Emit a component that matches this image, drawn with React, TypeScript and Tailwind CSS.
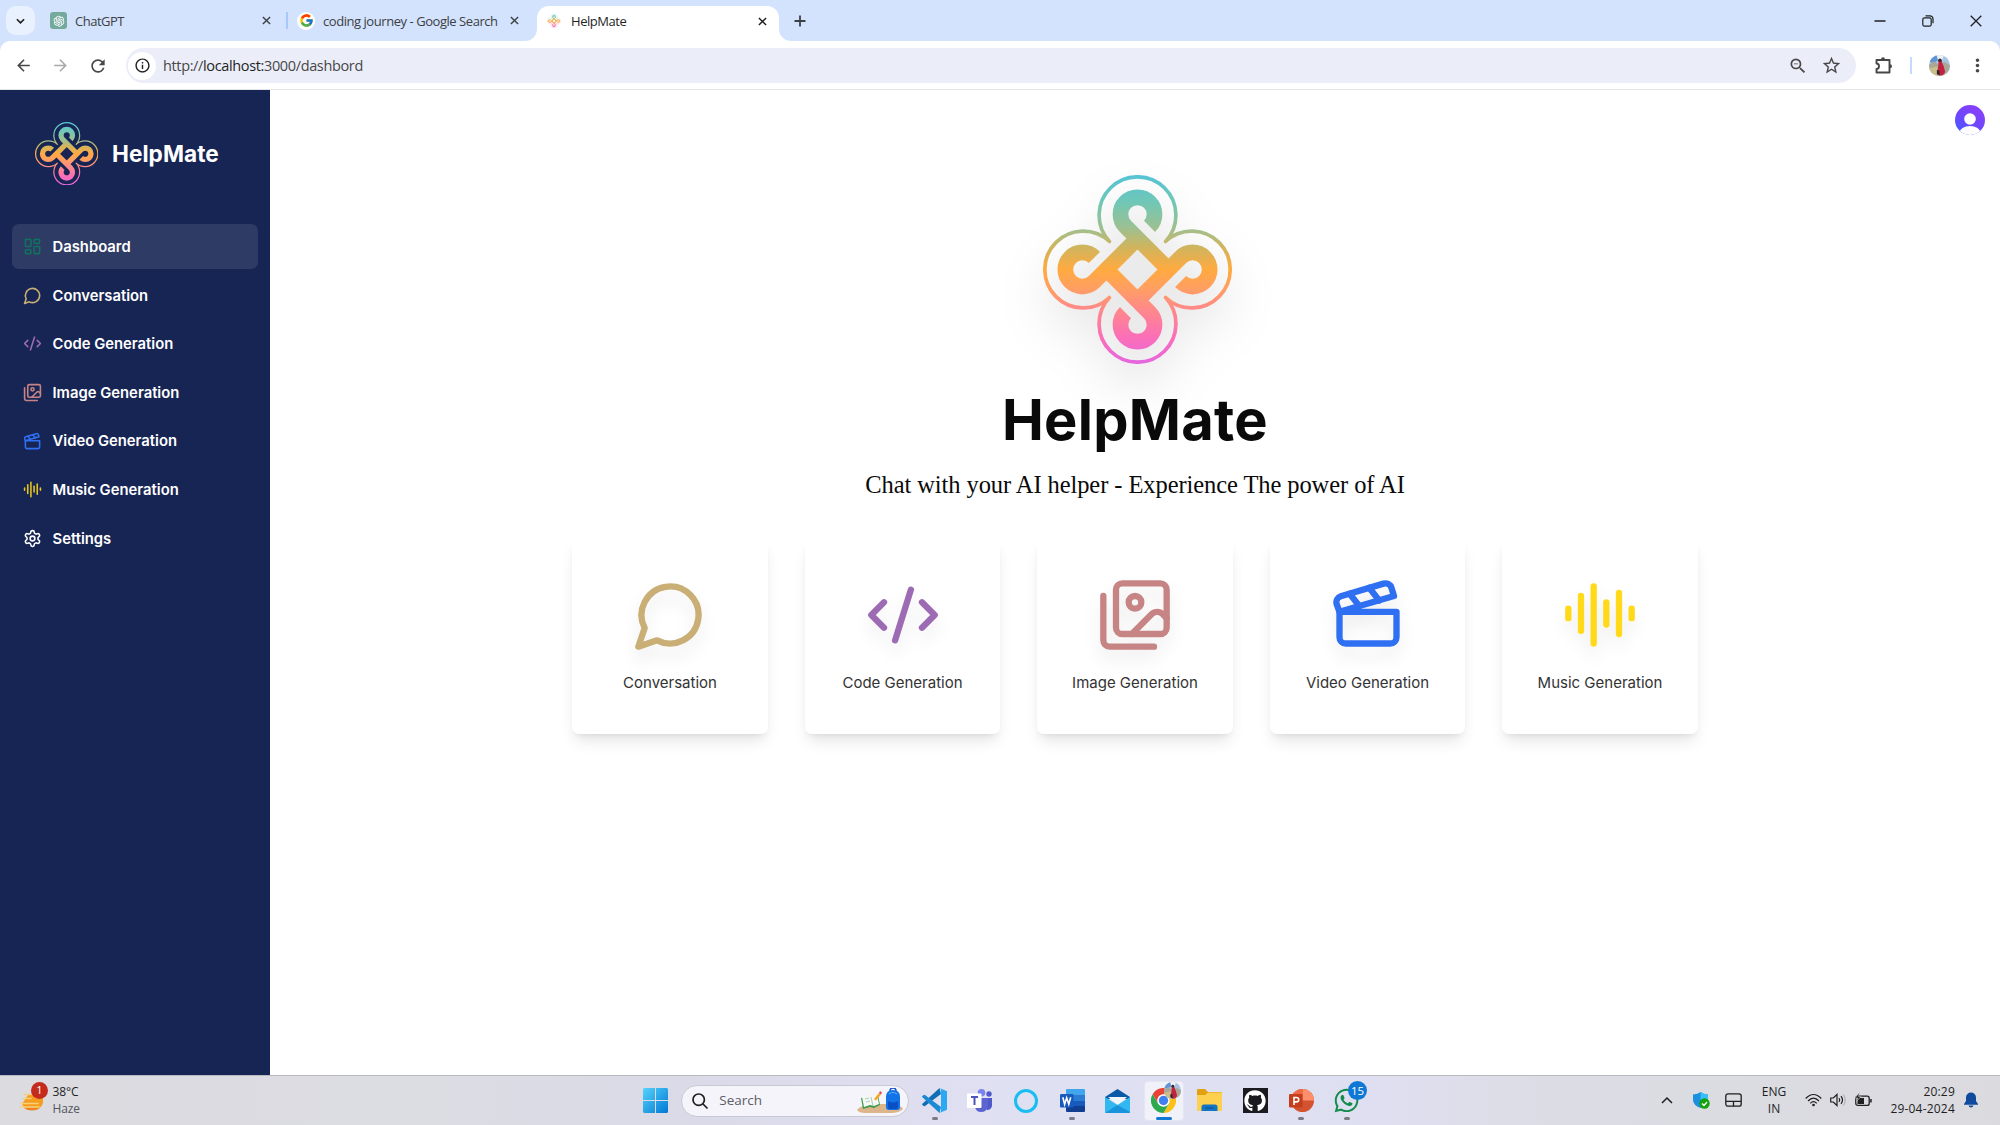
import React from "react";
import { FcGoogle } from "react-icons/fc";
import { FaGithub, FaWhatsapp } from "react-icons/fa";
import { AiOutlineOpenAI } from "react-icons/ai";
import {
  MdArrowBack,
  MdArrowForward,
  MdRefresh,
  MdStarOutline,
  MdMoreVert,
  MdZoomOut,
  MdInfoOutline,
} from "react-icons/md";

type IconProps = { className?: string };

function Stroke({ className, children }: IconProps & { children: React.ReactNode }) {
  return (
    <svg viewBox="0 0 24 24" fill="none" stroke="currentColor" strokeWidth="2" strokeLinecap="round" strokeLinejoin="round" className={className}>
      {children}
    </svg>
  );
}

const DashboardIcon = ({ className }: IconProps) => (
  <Stroke className={className}>
    <rect width="7" height="9" x="3" y="3" rx="1" />
    <rect width="7" height="5" x="14" y="3" rx="1" />
    <rect width="7" height="9" x="14" y="12" rx="1" />
    <rect width="7" height="5" x="3" y="16" rx="1" />
  </Stroke>
);
const ChatIcon = ({ className }: IconProps) => (
  <Stroke className={className}>
    <path d="M7.9 20A9 9 0 1 0 4 16.1L2 22Z" />
  </Stroke>
);
const CodeIcon = ({ className }: IconProps) => (
  <Stroke className={className}>
    <path d="m18 16 4-4-4-4" />
    <path d="m6 8-4 4 4 4" />
    <path d="m14.5 4-5 16" />
  </Stroke>
);
const ImagesIcon = ({ className }: IconProps) => (
  <Stroke className={className}>
    <path d="M18 22H4a2 2 0 0 1-2-2V6" />
    <path d="m22 13-1.296-1.296a2.41 2.41 0 0 0-3.408 0L11 18" />
    <circle cx="12" cy="8" r="2" />
    <rect width="16" height="16" x="6" y="2" rx="2" />
  </Stroke>
);
const ClapperIcon = ({ className }: IconProps) => (
  <Stroke className={className}>
    <path d="M20.2 6 3 11l-.9-2.4c-.3-1.1.3-2.2 1.3-2.5l13.5-4c1.1-.3 2.2.3 2.5 1.3Z" />
    <path d="m6.2 5.3 3.1 3.9" />
    <path d="m12.4 3.4 3.1 4" />
    <path d="M3 11h18v8a2 2 0 0 1-2 2H5a2 2 0 0 1-2-2Z" />
  </Stroke>
);
const AudioIcon = ({ className }: IconProps) => (
  <Stroke className={className}>
    <path d="M2 10v3" />
    <path d="M6 6v11" />
    <path d="M10 3v18" />
    <path d="M14 8v7" />
    <path d="M18 5v13" />
    <path d="M22 10v3" />
  </Stroke>
);
const SettingsIcon = ({ className }: IconProps) => (
  <Stroke className={className}>
    <path d="M12.22 2h-.44a2 2 0 0 0-2 2v.18a2 2 0 0 1-1 1.73l-.43.25a2 2 0 0 1-2 0l-.15-.08a2 2 0 0 0-2.73.73l-.22.38a2 2 0 0 0 .73 2.73l.15.1a2 2 0 0 1 1 1.72v.51a2 2 0 0 1-1 1.74l-.15.09a2 2 0 0 0-.73 2.73l.22.38a2 2 0 0 0 2.73.73l.15-.08a2 2 0 0 1 2 0l.43.25a2 2 0 0 1 1 1.73V20a2 2 0 0 0 2 2h.44a2 2 0 0 0 2-2v-.18a2 2 0 0 1 1-1.73l.43-.25a2 2 0 0 1 2 0l.15.08a2 2 0 0 0 2.73-.73l.22-.39a2 2 0 0 0-.73-2.73l-.15-.08a2 2 0 0 1-1-1.74v-.5a2 2 0 0 1 1-1.74l.15-.09a2 2 0 0 0 .73-2.73l-.22-.38a2 2 0 0 0-2.73-.73l-.15.08a2 2 0 0 1-2 0l-.43-.25a2 2 0 0 1-1-1.73V4a2 2 0 0 0-2-2z" />
    <circle cx="12" cy="12" r="3" />
  </Stroke>
);

/* Four interlaced loops inside a clover outline, one quarter drawn and rotated. */
function Knot({ className, id }: IconProps & { id: string }) {
  return (
    <svg viewBox="-283 -283 566 566" className={className} fill="none">
      <defs>
        <linearGradient id={id} gradientUnits="userSpaceOnUse" x1="0" y1="-283" x2="0" y2="283">
          <stop offset="0" stopColor="#55c3d6" />
          <stop offset=".15" stopColor="#72c7b4" />
          <stop offset=".28" stopColor="#9dc092" />
          <stop offset=".38" stopColor="#cfb55e" />
          <stop offset=".5" stopColor="#ffaa40" />
          <stop offset=".6" stopColor="#ff9f62" />
          <stop offset=".7" stopColor="#ff8b86" />
          <stop offset=".86" stopColor="#fb6eb8" />
          <stop offset="1" stopColor="#e466e0" />
        </linearGradient>
        <mask id={id + "m"} maskUnits="userSpaceOnUse" x="-283" y="-283" width="566" height="566">
          <g stroke="#fff">
            <path strokeWidth="11" strokeLinejoin="round" d="M-84-84A115 115 0 1 1 84-84A115 115 0 1 1 84 84A115 115 0 1 1-84 84A115 115 0 1 1-84-84Z" />
            {[0, 90, 180, 270].map((r) => (
              <path key={r} transform={`rotate(${r})`} strokeWidth="47" d="M36-129A51 51 0 1 0-36-129L93 0" />
            ))}
          </g>
        </mask>
      </defs>
      <rect x="-283" y="-283" width="566" height="566" fill={`url(#${id})`} mask={`url(#${id}m)`} />
    </svg>
  );
}

const nav = [
  { label: "Dashboard", Icon: DashboardIcon, row: "bg-white/10", color: "text-[#10715c]" },
  { label: "Conversation", Icon: ChatIcon, row: "", color: "text-[#c9ae75]" },
  { label: "Code Generation", Icon: CodeIcon, row: "", color: "text-[#9c6bb3]" },
  { label: "Image Generation", Icon: ImagesIcon, row: "", color: "text-[#c78484]" },
  { label: "Video Generation", Icon: ClapperIcon, row: "", color: "text-[#2f6ff2]" },
  { label: "Music Generation", Icon: AudioIcon, row: "", color: "text-[#e5c41c]" },
  { label: "Settings", Icon: SettingsIcon, row: "", color: "text-white" },
];

const tools = [
  { label: "Conversation", Icon: ChatIcon, color: "text-[#c9ae75]" },
  { label: "Code Generation", Icon: CodeIcon, color: "text-[#9c6bb3]" },
  { label: "Image Generation", Icon: ImagesIcon, color: "text-[#c78484]" },
  { label: "Video Generation", Icon: ClapperIcon, color: "text-[#2f6ff2]" },
  { label: "Music Generation", Icon: AudioIcon, color: "text-[#ffd91a]" },
];

const Cross = ({ className }: IconProps) => (
  <svg viewBox="0 0 10 10" className={className} stroke="currentColor" strokeWidth="1.6" fill="none">
    <path d="M1 1l8 8M9 1l-8 8" />
  </svg>
);

function TravelPhoto({ className }: IconProps) {
  return (
    <svg viewBox="0 0 24 24" className={className}>
      <rect width="24" height="24" fill="#a9c3e2" />
      <path d="M0 0h8l3 5-5 4-6-1z" fill="#5f94d6" />
      <path d="M9 0h8l-2 6-5-1z" fill="#eef3f8" />
      <path d="M0 11l6-4 5 4 7-3 6 4v12H0z" fill="#a9a896" />
      <path d="M0 15l9-2 4 11H0z" fill="#c9bf8c" />
      <path d="M11 6l3-.5 1 3 2 5 1.500 6-3 4h-4l-2-4 1-6z" fill="#c2213f" />
      <circle cx="12.500" cy="6" r="2" fill="#3a2a2c" />
      <path d="M9 17l3 1v5l-3-1z" fill="#2a2630" />
    </svg>
  );
}

function BrowserTabs() {
  return (
    <div className="flex h-[41px] items-end bg-[#d3e3fd] text-[13px] text-[#3c4043]">
      <div className="mb-[6px] ml-[6px] flex h-[29px] w-[29px] items-center justify-center rounded-[10px] bg-[#e9f1fe]">
        <svg viewBox="0 0 10 6" className="h-[6px] w-[9px]" fill="none" stroke="#1f1f1f" strokeWidth="1.8"><path d="M1 1l4 4 4-4" /></svg>
      </div>
      <div className="ml-[15px] flex h-[41px] w-[236px] items-center">
        <div className="flex h-[17px] w-[17px] items-center justify-center rounded-[3px] bg-[#74aa9c]">
          <AiOutlineOpenAI className="h-[14px] w-[14px] text-white" />
        </div>
        <span className="ml-[8px] pt-[2px] tracking-[-0.5px]">ChatGPT</span>
        <Cross className="ml-auto mr-[15px] h-[9px] w-[9px]" />
      </div>
      <div className="mb-[12px] h-[17px] w-[2px] bg-[#a8c7fa]" />
      <div className="flex h-[41px] w-[236px] items-center">
        <div className="ml-[9px] flex h-[18px] w-[18px] items-center justify-center rounded-full bg-white">
          <FcGoogle className="h-[15px] w-[15px]" />
        </div>
        <span className="ml-[8px] whitespace-nowrap pt-[2px] tracking-[-0.45px]">coding journey - Google Search</span>
        <Cross className="ml-auto mr-[5px] h-[9px] w-[9px]" />
      </div>
      <svg viewBox="0 0 12 12" className="ml-px h-3 w-3" fill="#fff"><path d="M12 0v12H0A12 12 0 0 0 12 0z" /></svg>
      <div className="flex h-[35px] w-[242px] items-center rounded-t-[12px] bg-white pb-[6px] pt-px text-[#1f1f1f]">
        <Knot id="fav" className="ml-[10px] h-[14px] w-[14px]" />
        <span className="ml-[10px] pt-[2px] tracking-[-0.45px]">HelpMate</span>
        <Cross className="ml-auto mr-[12px] h-[9px] w-[9px]" />
      </div>
      <svg viewBox="0 0 12 12" className="h-3 w-3" fill="#fff"><path d="M0 0v12h12A12 12 0 0 1 0 0z" /></svg>
      <svg viewBox="0 0 12 12" className="mb-[14px] ml-[3px] h-[12px] w-[12px]" stroke="#3c4043" strokeWidth="1.8"><path d="M6 0.500v11M.5 6h11" /></svg>
      <div className="ml-auto flex h-[41px] items-center text-[#1f1f1f]">
        <svg viewBox="0 0 12 12" className="h-3 w-3" stroke="currentColor" strokeWidth="1.5"><path d="M.5 6h11" /></svg>
        <svg viewBox="0 0 12 12" className="ml-[36px] h-3 w-3" fill="none" stroke="currentColor" strokeWidth="1.2">
          <rect x=".8" y="2.800" width="8.400" height="8.400" rx="1.800" />
          <path d="M3.500.8h4.500a3 3 0 0 1 3 3v4.500" />
        </svg>
        <svg viewBox="0 0 12 12" className="ml-[36px] mr-[18px] h-3 w-3" stroke="currentColor" strokeWidth="1.3"><path d="M.7.7l10.600 10.600M11.300.7L.7 11.300" /></svg>
      </div>
    </div>
  );
}

function Toolbar() {
  return (
    <div className="bg-[#d3e3fd]">
      <div className="flex h-[49px] items-center rounded-t-[10px] border-b border-[#e6e6e6] bg-white pt-px text-[#474747]">
        <MdArrowBack className="ml-[13.500px] h-[19px] w-[19px]" />
        <MdArrowForward className="ml-[18px] h-[19px] w-[19px] text-[#a9a9a9]" />
        <MdRefresh className="ml-[18px] h-[20px] w-[20px]" />
        <div className="ml-[18px] flex h-[35px] w-[1730px] items-center rounded-full bg-[#ebeef9]">
          <div className="ml-[2.500px] flex h-[28px] w-[28px] items-center justify-center rounded-full bg-white">
            <MdInfoOutline className="h-[17px] w-[17px] text-[#1f1f1f]" />
          </div>
          <span className="ml-[7px] text-[14.500px] tracking-[-0.36px]">
            http://<span className="text-[#1f1f1f]">localhost:</span>3000/dashbord
          </span>
          <MdZoomOut className="ml-auto h-[20px] w-[20px]" />
          <MdStarOutline className="ml-[13px] mr-[14px] h-[21px] w-[21px]" />
        </div>
        <svg viewBox="0 0 18 18" className="ml-[19.500px] h-[18px] w-[18px]" fill="none" stroke="currentColor" strokeWidth="1.900" strokeLinejoin="round">
          <path d="M1.500 3H14.500V15.500H1.500V12Q4 11.800 4 9.200T1.500 6.500z" />
          <path d="M6 2.500a2 2.200 0 0 1 4 0zM15 7.300a2 2 0 0 1 0 4z" fill="currentColor" stroke="none" />
        </svg>
        <div className="ml-[17px] h-[17px] w-[2px] bg-[#c6dafc]" />
        <TravelPhoto className="ml-[17px] h-[21px] w-[21px] rounded-full" />
        <MdMoreVert className="ml-[16.500px] h-[21px] w-[21px]" />
      </div>
    </div>
  );
}

function Sidebar() {
  return (
    <aside className="flex w-[270px] flex-col bg-[#172554] font-['Inter'] text-white">
      <div className="ml-[34.500px] mt-[31.500px] flex h-[64px] items-center">
        <Knot id="side" className="h-[63.500px] w-[63.500px]" />
        <span className="ml-[14px] pt-px text-[22.600px] font-bold leading-none tracking-[0.05px]">HelpMate</span>
      </div>
      <nav className="mt-[38.500px] flex flex-col gap-[3.650px] pl-[11.500px] pr-[12px]">
        {nav.map(({ label, Icon, row, color }) => (
          <div key={label} className={`flex h-[45px] items-center rounded-[7px] ${row}`}>
            <Icon className={`ml-[11px] h-[19px] w-[19px] ${color}`} />
            <span className="ml-[11px] pt-px text-[14.800px] font-semibold tracking-[0.01px]">{label}</span>
          </div>
        ))}
      </nav>
    </aside>
  );
}

function Main() {
  return (
    <main className="relative flex flex-1 flex-col items-center bg-white">
      <svg viewBox="0 0 30 30" className="absolute right-[15px] top-[15px] h-[30px] w-[30px]">
        <defs>
          <linearGradient id="user" x1="0" y1="1" x2=".7" y2="0">
            <stop offset="0" stopColor="#3a62ff" />
            <stop offset=".5" stopColor="#6c47ff" />
            <stop offset="1" stopColor="#8a3ffc" />
          </linearGradient>
          <clipPath id="userClip"><circle cx="15" cy="15" r="15" /></clipPath>
        </defs>
        <g clipPath="url(#userClip)">
          <rect width="30" height="30" fill="url(#user)" />
          <circle cx="15" cy="14" r="5.800" fill="#fff" />
          <ellipse cx="15" cy="27.500" rx="10.500" ry="6.500" fill="#fff" />
        </g>
      </svg>
      <Knot id="hero" className="ml-[5px] mt-[85px] h-[189px] w-[189px] overflow-visible drop-shadow-[0_25px_25px_rgba(0,0,0,0.15)]" />
      <h1 className="mt-[28px] font-['Inter'] text-[56px] font-bold leading-[56px] tracking-[0.3px] text-[#0a0a0a]">HelpMate</h1>
      <p className="mt-[21px] whitespace-nowrap font-['Liberation_Serif'] text-[24.500px] leading-[32px] tracking-[-0.08px] text-[#0a0a0a]">
        Chat with your AI helper - Experience The power of AI
      </p>
      <div className="mt-[36.500px] flex gap-[37px]">
        {tools.map(({ label, Icon, color }) => (
          <div key={label} className="flex h-[196px] w-[195.500px] flex-col items-center rounded-[7px] bg-white shadow-[0_10px_15px_-3px_rgba(0,0,0,0.1),0_4px_6px_-4px_rgba(0,0,0,0.1)]">
            <Icon className={`mt-[39px] h-[76px] w-[76px] drop-shadow-[0_10px_8px_rgba(0,0,0,0.08)] ${color}`} />
            <span className="mt-[18.500px] font-['Inter'] text-[15px] leading-[24px] text-[#333]">{label}</span>
          </div>
        ))}
      </div>
    </main>
  );
}

function WindowsLogo() {
  return (
    <svg viewBox="0 0 25 25" className="h-[25px] w-[25px]">
      <defs>
        <linearGradient id="win" gradientUnits="userSpaceOnUse" x1="0" y1="0" x2="25" y2="25">
          <stop offset="0" stopColor="#55d3fb" />
          <stop offset="1" stopColor="#0078d4" />
        </linearGradient>
      </defs>
      <path fill="url(#win)" d="M1 0h11v12H0V1zM13 0h11l1 1v11H13zM0 13h12v12H1l-1-1zM13 13h12v11l-1 1H13z" />
    </svg>
  );
}

function SearchArt() {
  return (
    <svg viewBox="0 0 46 26" className="h-[26px] w-[46px]">
      <path d="M0 22q2-4 14-6h18q13 1 14 5-4 4-12 4H8q-6 0-8-3z" fill="#dcb68a" />
      <path d="M4 10l8-2 4 2 5-3 2 10-6 3-4-1-7 2z" fill="#3f9b52" />
      <path d="M5 9l7-2 3 2 5-3 2 10-5 2-4-1-6 2z" fill="#f4f8f4" />
      <path d="M14 9l2 9M8 11l4-1M9 14l4-1" stroke="#9dbba6" strokeWidth=".8" fill="none" />
      <path d="M17 11l5-6 2 1.500-5 6z" fill="#f5a623" />
      <path d="M22 5l1-2 2 1.500-1 2z" fill="#e5484d" />
      <path d="M33 3q0-3 3-3t3 3" fill="none" stroke="#1456c8" strokeWidth="1.500" />
      <path d="M29 9q0-7 7-7t7 7v10q0 3-3 3h-8q-3 0-3-3z" fill="#1273e6" />
      <path d="M31 13q5 3 10 0v6q0 2-2 2h-6q-2 0-2-2z" fill="#0b4fc4" />
      <path d="M32 6q4-3 8 0" stroke="#5db0ff" strokeWidth="1.200" fill="none" />
    </svg>
  );
}

const VsCode = () => (
  <svg viewBox="0 0 25 25" className="h-[25px] w-[25px]">
    <path d="M17.500 0L.4 15.700q-.6.600 0 1.200L1.700 18q.7.500 1.300 0L19 6z" fill="#0f6fb5" />
    <path d="M17.500 25L.4 9.300q-.6-.6 0-1.200L1.700 7q.7-.5 1.300 0L19 19z" fill="#1a8ad4" />
    <path d="M17.500 0L25 3.300v18.400L17.500 25q1.500-1 1.500-2V2q0-1-1.500-2z" fill="#2aa8f2" />
  </svg>
);
const Teams = () => (
  <svg viewBox="0 0 26 24" className="h-[24px] w-[26px]">
    <circle cx="22" cy="5" r="2.700" fill="#5059c9" />
    <path d="M17 9h8v8q-1 4-5 4z" fill="#5059c9" />
    <circle cx="14.500" cy="3.800" r="3.800" fill="#7b83eb" />
    <path d="M9 9h12v8q-1 6-7 6-5 0-6-5z" fill="#5c64d2" />
    <rect y="4.500" width="14.500" height="14.500" rx="1" fill="#fff" />
    <path d="M4 8h7M7.500 8v8" stroke="#4b53bc" strokeWidth="2" />
  </svg>
);
const Word = () => (
  <svg viewBox="0 0 25 23" className="h-[23px] w-[25px]">
    <path d="M7 0h17q1 0 1 1v5H6V1q0-1 1-1z" fill="#41a5ee" />
    <path d="M6 6h19v6H6z" fill="#2b7cd3" />
    <path d="M6 12h19v5H6z" fill="#185abd" />
    <path d="M6 17h19v5q0 1-1 1H7q-1 0-1-1z" fill="#103f91" />
    <rect y="5" width="13.500" height="13.500" rx="1.200" fill="#185abd" />
    <path d="M2.800 8.300l1.800 7 2.100-6.500 2.100 6.500 1.900-7" stroke="#fff" strokeWidth="1.600" fill="none" />
  </svg>
);
const Mail = () => (
  <svg viewBox="0 0 25 24" className="h-[24px] w-[25px]">
    <path d="M0 8l12.500-8L25 8v2H0z" fill="#0a5aa8" />
    <path d="M3 8h19l-9 8z" fill="#f2f6fb" />
    <path d="M0 8l12.500 8L25 8v15q0 1-1 1H1q-1 0-1-1z" fill="#32b8f0" />
    <path d="M12.500 16L0 24h24q1 0 1-1z" fill="#1a93dc" />
  </svg>
);
const Chrome = () => (
  <svg viewBox="-24 -24 48 48" className="h-[25px] w-[25px]">
    <path d="M0-12H20.800A24 24 0 0 0-20.800-12L-10.400 6z" fill="#ea4335" />
    <path transform="rotate(120)" d="M0-12H20.800A24 24 0 0 0-20.800-12L-10.400 6z" fill="#fbc116" />
    <path transform="rotate(240)" d="M0-12H20.800A24 24 0 0 0-20.800-12L-10.400 6z" fill="#2da94f" />
    <circle r="12" fill="#fff" />
    <circle r="9" fill="#3f80f0" />
  </svg>
);
const Folder = () => (
  <svg viewBox="0 0 25 23" className="h-[23px] w-[25px]">
    <path d="M0 1q0-1 1-1h7l3 3h13q1 0 1 1v4H0z" fill="#e0a010" />
    <path d="M0 6h8l3-2.500h13q1 0 1 1V21q0 1-1 1H1q-1 0-1-1z" fill="#fdd04f" />
    <path d="M4.500 22v-4q0-2.500 2.500-2.500h11q2.500 0 2.500 2.500v4z" fill="#1474c4" />
    <path d="M8.500 19h8" stroke="#0b559c" strokeWidth="1.300" />
  </svg>
);
const PowerPoint = () => (
  <svg viewBox="0 0 25 23" className="h-[23px] w-[25px]">
    <circle cx="13.500" cy="11.500" r="11.500" fill="#d35230" />
    <path d="M13.500 0A11.500 11.500 0 0 1 25 11.500H13.500z" fill="#ff8f6b" />
    <path d="M13.500 0v11.500H2A11.500 11.500 0 0 1 13.500 0z" fill="#ed6c47" />
    <rect y="5" width="13.500" height="13.500" rx="1.200" fill="#c43e1c" />
    <path d="M5 16V8.500h2.500a2.200 2.200 0 0 1 0 4.400H5" stroke="#fff" strokeWidth="1.600" fill="none" />
  </svg>
);

function TaskApp({ children, running }: { children: React.ReactNode; running?: boolean }) {
  return (
    <div className="relative flex h-[49px] w-[45.800px] items-center justify-center">
      {children}
      {running && <div className="absolute bottom-[5px] h-[3px] w-[6px] rounded-full bg-[#7b7b85]" />}
    </div>
  );
}

function Taskbar() {
  return (
    <div className="flex h-[50px] items-center border-t border-[#b9b9c0] bg-[linear-gradient(90deg,#dbdbe0_0%,#dcdce3_22%,#dadae8_35%,#e0e0f3_50%,#dfdff2_68%,#dcdce4_78%,#dadadf_100%)] text-[#1f1f1f]">
      <div className="flex w-[632.500px] items-center pb-[2px]">
        <div className="relative ml-[20px] h-[32px] w-[32.500px]">
          <svg viewBox="0 0 24 24" className="absolute left-0 top-[6px] h-6 w-6">
            <path d="M2 14a11 9 0 0 0 21-1V5H8z" fill="#f59d1e" />
            <path d="M4 18a11 8 0 0 0 16 0z" fill="#ef8222" />
            <path d="M4 4.500h7M3 8.500h8M1 13.500h17M0 17h19" stroke="#f7d077" strokeWidth="1.600" strokeLinecap="round" />
          </svg>
          <div className="absolute left-[11px] top-[-2px] flex h-[17px] w-[17px] items-center justify-center rounded-full bg-[#c42b1c] text-[11px] text-white">1</div>
        </div>
        <div className="flex flex-col text-[12px] leading-[17px] tracking-[-0.1px]">
          <span>38°C</span>
          <span className="text-[#55555c]">Haze</span>
        </div>
      </div>
      <TaskApp><WindowsLogo /></TaskApp>
      <div className="ml-[3px] flex h-[32px] w-[228px] items-center rounded-full border border-[#c9c9d6] bg-[#f4f4fa]">
        <svg viewBox="0 0 16 16" className="ml-[10px] h-[16px] w-[16px]" fill="none" stroke="#1f1f1f" strokeWidth="1.700" strokeLinecap="round">
          <circle cx="6.700" cy="6.700" r="5.700" />
          <path d="M11 11l4 4" />
        </svg>
        <span className="ml-[11px] text-[13.500px] text-[#5d5d66]">Search</span>
        <div className="ml-auto mr-[5px]"><SearchArt /></div>
      </div>
      <div className="ml-[2.500px] flex items-center">
        <TaskApp running><VsCode /></TaskApp>
        <TaskApp><Teams /></TaskApp>
        <TaskApp>
          <div className="h-[24px] w-[24px] rounded-full border-[3px] border-[#19bdf2]" />
        </TaskApp>
        <TaskApp running><Word /></TaskApp>
        <TaskApp><Mail /></TaskApp>
        <div className="relative flex h-[49px] w-[45.800px] items-center justify-center">
          <div className="flex h-[40px] w-[40px] items-center justify-center rounded-[4px] border border-[#e6e6f2] bg-[#f1f1fa]"><Chrome /></div>
          <TravelPhoto className="absolute left-[23px] top-[6px] h-[17px] w-[17px] rounded-full" />
          <div className="absolute bottom-[5px] h-[3px] w-[16px] rounded-full bg-[#0f78d4]" />
        </div>
        <TaskApp><Folder /></TaskApp>
        <TaskApp>
          <div className="flex h-[25px] w-[25px] items-center justify-center bg-[#1b1b1f]">
            <FaGithub className="h-[22px] w-[22px] text-white" />
          </div>
        </TaskApp>
        <TaskApp running><PowerPoint /></TaskApp>
        <TaskApp running>
          <FaWhatsapp className="h-[27px] w-[27px] text-[#128c4b]" />
          <div className="absolute left-[24px] top-[5px] flex h-[19px] w-[19px] items-center justify-center rounded-full bg-[#0f78d4] text-[11.500px] text-white">15</div>
        </TaskApp>
      </div>
      <div className="ml-auto flex items-center pb-px">
        <svg viewBox="0 0 12 8" className="h-[8px] w-[12px]" fill="none" stroke="#1f1f1f" strokeWidth="1.500"><path d="M1 7l5-5 5 5" /></svg>
        <svg viewBox="0 0 17 17" className="ml-[20px] h-[17px] w-[17px]">
          <path d="M0 2.500Q5 2 7.500 0 10 2 15 2.500V8q0 5-7.500 8Q0 13 0 8z" fill="#1c8fe0" />
          <path d="M7.500 0Q10 2 15 2.500V8H7.500z" fill="#37c0f5" />
          <circle cx="11.500" cy="11.500" r="5.200" fill="#13a10e" />
          <path d="M9 11.500l2 2 3-3.500" stroke="#fff" strokeWidth="1.300" fill="none" />
        </svg>
        <svg viewBox="0 0 17 14" className="ml-[15px] h-[14px] w-[17px]" fill="none" stroke="#1f1f1f" strokeWidth="1.300">
          <rect x=".8" y=".8" width="15.400" height="12.400" rx="2.200" />
          <path d="M1 8.300h15M8.500 8.300v5" />
        </svg>
        <div className="ml-[19px] w-[26px] text-center text-[12px] leading-[17px]">ENG<br />IN</div>
        <svg viewBox="0 0 17 14" className="ml-[18px] h-[14px] w-[17px]" fill="none" stroke="#1f1f1f" strokeWidth="1.200">
          <path d="M.7 5.500Q8.500-2.500 16.300 5.500M3 8Q8.500 2.300 14 8M5.300 10.300Q8.500 7 11.700 10.300" />
          <circle cx="8.500" cy="12" r="1.300" fill="#1f1f1f" stroke="none" />
        </svg>
        <svg viewBox="0 0 17 14" className="ml-[8px] h-[14px] w-[17px]" fill="none" stroke="#1f1f1f" strokeWidth="1.200">
          <path d="M.7 5h2.600L7 1.500v11L3.300 9H.7z" />
          <path d="M9 5q1.500 2 0 4M11 3.200q3 3.800 0 7.600" />
          <path d="M13.300 1.500q4 5.500 0 11" stroke="#b0b0b8" />
        </svg>
        <svg viewBox="0 0 17 14" className="ml-[8px] h-[14px] w-[17px] overflow-visible">
          <rect x=".8" y="3.200" width="13.400" height="9.200" rx="2" fill="none" stroke="#1f1f1f" strokeWidth="1.300" />
          <path d="M2.500 5h6.500v6H2.500z" fill="#1f1f1f" />
          <path d="M15.200 6v3.500h1.500V6z" fill="#1f1f1f" />
          <path d="M4.500-.5L0 5h3L1.500 8.500 6 3.500H3.500z" fill="#1f1f1f" stroke="#dcdce2" strokeWidth=".5" />
        </svg>
        <div className="ml-[17px] w-[66px] whitespace-nowrap text-right text-[12px] leading-[17px] tracking-[0.2px]">20:29<br />29-04-2024</div>
        <svg viewBox="0 0 14 16" className="ml-[9px] mr-[22px] h-[16px] w-[14px]" fill="#0f4a9c">
          <path d="M2 5.500a5 5 0 0 1 10 0V9l2 3v.8H0V12l2-3zM4.500 13.600h5q-.5 2-2.500 2t-2.500-2z" />
        </svg>
      </div>
    </div>
  );
}

export default function App() {
  return (
    <div className="flex h-[1125px] w-[2000px] flex-col overflow-hidden bg-white font-['Open_Sans',sans-serif]">
      <BrowserTabs />
      <Toolbar />
      <div className="flex min-h-0 flex-1">
        <Sidebar />
        <Main />
      </div>
      <Taskbar />
    </div>
  );
}
